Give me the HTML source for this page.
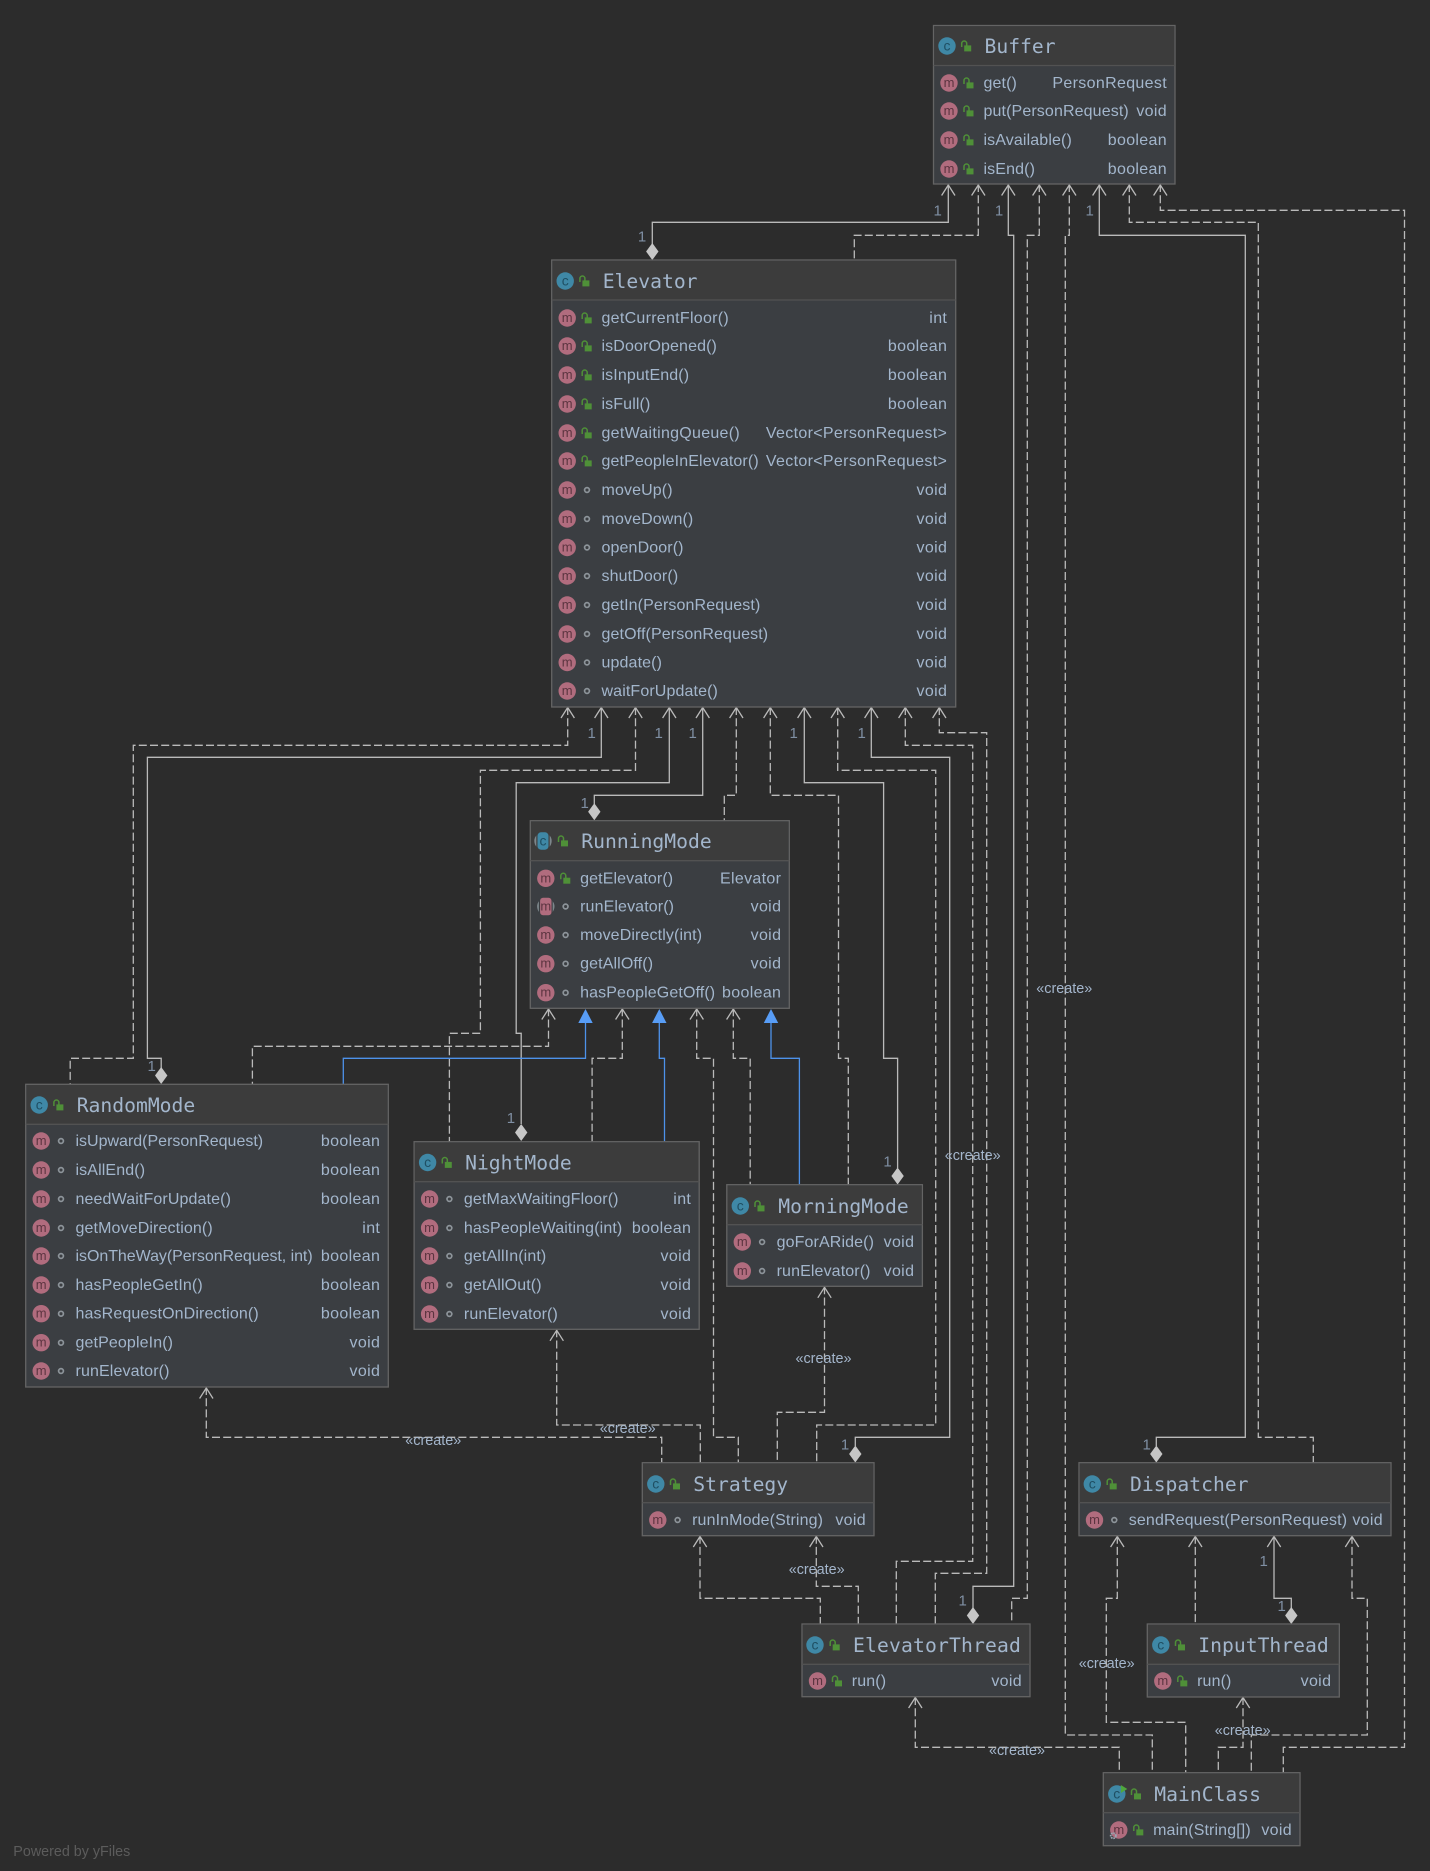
<!DOCTYPE html>
<html><head><meta charset="utf-8"><title>UML Diagram</title>
<style>
html,body{margin:0;padding:0;background:#2c2c2c;width:1430px;height:1871px;overflow:hidden}
svg{display:block}
text{font-family:"Liberation Sans",sans-serif;font-size:16px;fill:#a3b6cc;letter-spacing:.12px}
.r{text-anchor:end;letter-spacing:.33px}
.h{font-family:"DejaVu Sans Mono","Liberation Mono",monospace;font-size:19.7px;letter-spacing:0}
.mt{font-size:13px;fill:#5c3440;text-anchor:middle;letter-spacing:0}
.ct{font-size:14px;fill:#1f4f63;text-anchor:middle;letter-spacing:0}
.u{font-size:15px;fill:#7f8fa3;text-anchor:middle;letter-spacing:0}
.k{font-size:14.4px;fill:#a4b6cc;text-anchor:middle;letter-spacing:0}
.s,.d,.b,.a{fill:none;stroke-width:1.3}
.s,.d,.a{stroke:#bababa}
.d{stroke-dasharray:8 3.2}
.b{stroke:#4d92ea}
.bx{fill:#3b3e42;stroke:#646464;stroke-width:1.3}
.hd{fill:#3c3c3c}
.sp{stroke:#525252;stroke-width:1.3}
.mc{fill:#b16c7e}
.cc{fill:#3f88a6}
</style></head>
<body>
<svg width="1430" height="1871" viewBox="0 0 1430 1871" xmlns="http://www.w3.org/2000/svg">
<defs>
<path id="a" class="a" d="M-6.7 11L0 .5 6.7 11"/>
<path id="t" fill="#589df6" d="M0 0L7.2 14H-7.2Z"/>
<path id="w" fill="#c6c6c6" d="M0 0L6.2 8.5 0 17-6.2 8.5Z"/>
<g id="l"><path d="M1 1V-2.5a2.5 2.5 0 0 1 5 0V0" fill="none" stroke="#4f9038" stroke-width="1.5"/><rect x="3.5" y="-.6" width="7" height="6" fill="#4f9038"/></g>
<circle id="o" cx="35.3" r="2.4" fill="none" stroke="#8d949a" stroke-width="1.7"/>
</defs>
<rect width="1430" height="1871" fill="#2c2c2c"/>

<!-- edges -->
<g>
<path class="s" d="M948.3 184V222.3H652.3V244"/>
<path class="d" d="M978.3 184V235.3H854.3V260"/>
<path class="s" d="M1008.3 184V235.3H1013.7V1586.3H973V1608"/>
<path class="d" d="M1039.3 184V235.3H1027.3V1598.3H1011.7V1624"/>
<path class="d" d="M1069.3 184V235.3H1065.3V1735H1152.3V1772.7"/>
<path class="s" d="M1099.3 184V235.3H1245.3V1437.3H1156.3V1446"/>
<path class="d" d="M1129.3 184V222.3H1258.3V1437.3H1313.3V1462.7"/>
<path class="d" d="M1160.3 184V210.3H1404.5V1747.3H1283.3V1772.7"/>

<path class="d" d="M567.7 707V745.3H133.3V1058.3H70.2V1084.3"/>
<path class="s" d="M601.3 707V757.3H147.4V1058.3H161.2V1068"/>
<path class="d" d="M635.5 707V770.3H480.4V1033.3H449.4V1141.7"/>
<path class="s" d="M669.3 707V782.7H516.2V1033.3H521.2V1124"/>
<path class="s" d="M702.7 707V795.3H594.3V804"/>
<path class="d" d="M736.3 707V795.3H724.3V820.7"/>
<path class="d" d="M770.3 707V795.3H838.5V1058.3H848.3V1184.7"/>
<path class="s" d="M804.3 707V782.7H883.6V1058.3H897.6V1168"/>
<path class="d" d="M837.7 707V770.3H935.7V1425H816.7V1462.7"/>
<path class="s" d="M871.3 707V757.3H949.7V1437.3H855.3V1446"/>
<path class="d" d="M905.3 707V745.3H972.7V1561.3H896.3V1624"/>
<path class="d" d="M939.3 707V732.7H986.7V1573.3H935.3V1624"/>

<path class="d" d="M548.5 1008.3V1046.3H252.4V1084.3"/>
<path class="d" d="M622.3 1008.3V1058.3H592.1V1141.7"/>
<path class="d" d="M696.7 1008.3V1058.3H713.5V1437.3H738.3V1462.7"/>
<path class="d" d="M733.3 1008.3V1058.3H750.2V1184.7"/>
<path class="b" d="M585.5 1020V1058.3H343.3V1084.3"/>
<path class="b" d="M659.3 1020V1058.3H664.5V1141.7"/>
<path class="b" d="M771 1020V1058.3H799.4V1184.7"/>

<path class="d" d="M206.3 1387V1437.3H661.7V1462.7"/>
<path class="d" d="M556.7 1329.3V1425H700.3V1462.7"/>
<path class="d" d="M824.5 1286.3V1412.3H777.3V1462.7"/>
<path class="d" d="M700 1535.7V1598.3H820.3V1624"/>
<path class="d" d="M816.3 1535.7V1586.3H858.3V1624"/>
<path class="d" d="M915.3 1697V1747.3H1119.3V1772.7"/>
<path class="d" d="M1117.3 1535.7V1598.3H1106.3V1722.3H1185.7V1772.7"/>
<path class="d" d="M1195.3 1535.7V1624"/>
<path class="s" d="M1274 1535.7V1598.3H1291.3V1608"/>
<path class="d" d="M1352 1535.7V1598.3H1367.3V1735H1251.3V1772.7"/>
<path class="d" d="M1243 1697V1747.3H1218.3V1772.7"/>

<!-- open arrowheads -->
<use href="#a" x="948.3" y="184.5"/><use href="#a" x="978.3" y="184.5"/><use href="#a" x="1008.3" y="184.5"/><use href="#a" x="1039.3" y="184.5"/><use href="#a" x="1069.3" y="184.5"/><use href="#a" x="1099.3" y="184.5"/><use href="#a" x="1129.3" y="184.5"/><use href="#a" x="1160.3" y="184.5"/>
<use href="#a" x="567.7" y="707"/><use href="#a" x="601.3" y="707"/><use href="#a" x="635.5" y="707"/><use href="#a" x="669.3" y="707"/><use href="#a" x="702.7" y="707"/><use href="#a" x="736.3" y="707"/><use href="#a" x="770.3" y="707"/><use href="#a" x="804.3" y="707"/><use href="#a" x="837.7" y="707"/><use href="#a" x="871.3" y="707"/><use href="#a" x="905.3" y="707"/><use href="#a" x="939.3" y="707"/>
<use href="#a" x="548.5" y="1008.5"/><use href="#a" x="622.3" y="1008.5"/><use href="#a" x="696.7" y="1008.5"/><use href="#a" x="733.3" y="1008.5"/>
<use href="#a" x="206.3" y="1387.5"/><use href="#a" x="556.7" y="1329.8"/><use href="#a" x="824.5" y="1286.8"/>
<use href="#a" x="700" y="1536"/><use href="#a" x="816.3" y="1536"/><use href="#a" x="915.3" y="1697"/>
<use href="#a" x="1117.3" y="1536"/><use href="#a" x="1195.3" y="1536"/><use href="#a" x="1274" y="1536"/><use href="#a" x="1352" y="1536"/><use href="#a" x="1243" y="1697"/>
<!-- triangles -->
<use href="#t" x="585.5" y="1009"/><use href="#t" x="659.3" y="1009"/><use href="#t" x="771" y="1009"/>
<!-- diamonds -->
<use href="#w" x="652.3" y="243"/><use href="#w" x="594.3" y="803.3"/><use href="#w" x="161.2" y="1067"/><use href="#w" x="521.2" y="1124"/><use href="#w" x="897.6" y="1167.5"/><use href="#w" x="855.3" y="1445.5"/><use href="#w" x="1156.3" y="1445.5"/><use href="#w" x="973" y="1607"/><use href="#w" x="1291.3" y="1607"/>
</g>

<!-- multiplicity -->
<g>
<text class="u" x="937.7" y="215.5">1</text><text class="u" x="999" y="215.5">1</text><text class="u" x="1089.7" y="215.5">1</text><text class="u" x="642" y="241.5">1</text>
<text class="u" x="591.7" y="738">1</text><text class="u" x="658.7" y="738">1</text><text class="u" x="692.7" y="738">1</text><text class="u" x="793.7" y="738">1</text><text class="u" x="861.7" y="738">1</text>
<text class="u" x="584.7" y="808">1</text><text class="u" x="151.7" y="1071">1</text><text class="u" x="510.9" y="1123">1</text><text class="u" x="887.6" y="1166.5">1</text>
<text class="u" x="845" y="1449.5">1</text><text class="u" x="962.7" y="1605.5">1</text><text class="u" x="1146.7" y="1449.5">1</text><text class="u" x="1263.7" y="1566">1</text><text class="u" x="1281.7" y="1611">1</text>
</g>

<!-- Buffer -->
<g transform="translate(933.5,0)">
<rect class="bx" width="241.5" height="158.5" y="25.5"/><rect class="hd" x=".7" y="26.2" width="240.1" height="39.3"/><path class="sp" d="M0 65.5H241.5"/>
<circle class="cc" cx="13.5" cy="46" r="8.7"/><text class="ct" x="13.5" y="50.5">c</text><use href="#l" x="27.2" y="46"/><text class="h" x="51" y="53">Buffer</text>
<g transform="translate(0,83)"><circle class="mc" cx="15.5" r="8.7"/><text class="mt" x="15.5" y="4">m</text><use href="#l" x="29.5"/><text x="50" y="5">get()</text><text class="r" x="233.5" y="5">PersonRequest</text></g>
<g transform="translate(0,111)"><circle class="mc" cx="15.5" r="8.7"/><text class="mt" x="15.5" y="4">m</text><use href="#l" x="29.5"/><text x="50" y="5">put(PersonRequest)</text><text class="r" x="233.5" y="5">void</text></g>
<g transform="translate(0,140)"><circle class="mc" cx="15.5" r="8.7"/><text class="mt" x="15.5" y="4">m</text><use href="#l" x="29.5"/><text x="50" y="5">isAvailable()</text><text class="r" x="233.5" y="5">boolean</text></g>
<g transform="translate(0,169)"><circle class="mc" cx="15.5" r="8.7"/><text class="mt" x="15.5" y="4">m</text><use href="#l" x="29.5"/><text x="50" y="5">isEnd()</text><text class="r" x="233.5" y="5">boolean</text></g>
</g>

<!-- Elevator -->
<g transform="translate(551.7,0)">
<rect class="bx" width="404" height="447" y="260"/><rect class="hd" x=".7" y="260.7" width="402.6" height="39.3"/><path class="sp" d="M0 300H404"/>
<circle class="cc" cx="13.5" cy="281" r="8.7"/><text class="ct" x="13.5" y="285.5">c</text><use href="#l" x="27.2" y="281"/><text class="h" x="51" y="288">Elevator</text>
<g transform="translate(0,318)"><circle class="mc" cx="15.5" r="8.7"/><text class="mt" x="15.5" y="4">m</text><use href="#l" x="29.5"/><text x="49.8" y="5" style="letter-spacing:.28px">getCurrentFloor()</text><text class="r" x="395.5" y="5">int</text></g>
<g transform="translate(0,346)"><circle class="mc" cx="15.5" r="8.7"/><text class="mt" x="15.5" y="4">m</text><use href="#l" x="29.5"/><text x="49.8" y="5">isDoorOpened()</text><text class="r" x="395.5" y="5">boolean</text></g>
<g transform="translate(0,375)"><circle class="mc" cx="15.5" r="8.7"/><text class="mt" x="15.5" y="4">m</text><use href="#l" x="29.5"/><text x="49.8" y="5">isInputEnd()</text><text class="r" x="395.5" y="5">boolean</text></g>
<g transform="translate(0,404)"><circle class="mc" cx="15.5" r="8.7"/><text class="mt" x="15.5" y="4">m</text><use href="#l" x="29.5"/><text x="49.8" y="5">isFull()</text><text class="r" x="395.5" y="5">boolean</text></g>
<g transform="translate(0,433)"><circle class="mc" cx="15.5" r="8.7"/><text class="mt" x="15.5" y="4">m</text><use href="#l" x="29.5"/><text x="49.8" y="5" style="letter-spacing:.28px">getWaitingQueue()</text><text class="r" x="395.5" y="5">Vector&lt;PersonRequest&gt;</text></g>
<g transform="translate(0,461)"><circle class="mc" cx="15.5" r="8.7"/><text class="mt" x="15.5" y="4">m</text><use href="#l" x="29.5"/><text x="49.8" y="5">getPeopleInElevator()</text><text class="r" x="395.5" y="5">Vector&lt;PersonRequest&gt;</text></g>
<g transform="translate(0,490)"><circle class="mc" cx="15.5" r="8.7"/><text class="mt" x="15.5" y="4">m</text><use href="#o"/><text x="49.8" y="5">moveUp()</text><text class="r" x="395.5" y="5">void</text></g>
<g transform="translate(0,519)"><circle class="mc" cx="15.5" r="8.7"/><text class="mt" x="15.5" y="4">m</text><use href="#o"/><text x="49.8" y="5">moveDown()</text><text class="r" x="395.5" y="5">void</text></g>
<g transform="translate(0,547.5)"><circle class="mc" cx="15.5" r="8.7"/><text class="mt" x="15.5" y="4">m</text><use href="#o"/><text x="49.8" y="5">openDoor()</text><text class="r" x="395.5" y="5">void</text></g>
<g transform="translate(0,576)"><circle class="mc" cx="15.5" r="8.7"/><text class="mt" x="15.5" y="4">m</text><use href="#o"/><text x="49.8" y="5">shutDoor()</text><text class="r" x="395.5" y="5">void</text></g>
<g transform="translate(0,605)"><circle class="mc" cx="15.5" r="8.7"/><text class="mt" x="15.5" y="4">m</text><use href="#o"/><text x="49.8" y="5">getIn(PersonRequest)</text><text class="r" x="395.5" y="5">void</text></g>
<g transform="translate(0,634)"><circle class="mc" cx="15.5" r="8.7"/><text class="mt" x="15.5" y="4">m</text><use href="#o"/><text x="49.8" y="5">getOff(PersonRequest)</text><text class="r" x="395.5" y="5">void</text></g>
<g transform="translate(0,662.5)"><circle class="mc" cx="15.5" r="8.7"/><text class="mt" x="15.5" y="4">m</text><use href="#o"/><text x="49.8" y="5">update()</text><text class="r" x="395.5" y="5">void</text></g>
<g transform="translate(0,691)"><circle class="mc" cx="15.5" r="8.7"/><text class="mt" x="15.5" y="4">m</text><use href="#o"/><text x="49.8" y="5">waitForUpdate()</text><text class="r" x="395.5" y="5">void</text></g>
</g>

<!-- RunningMode -->
<g transform="translate(530.3,0)">
<rect class="bx" width="259" height="187.6" y="820.7"/><rect class="hd" x=".7" y="821.4" width="257.6" height="39.3"/><path class="sp" d="M0 860.7H259"/>
<circle cx="12.7" cy="841" r="8.7" fill="#7d878c"/><rect x="6" y="831" width="13.4" height="20" fill="#3c3c3c"/><rect x="7.2" y="832.3" width="11" height="17.4" rx="3.5" fill="#3f88a6"/><text class="ct" x="12.7" y="845.5">c</text>
<use href="#l" x="27.2" y="841"/><text class="h" x="51" y="848">RunningMode</text>
<g transform="translate(0,878.3)"><circle class="mc" cx="15.5" r="8.7"/><text class="mt" x="15.5" y="4">m</text><use href="#l" x="29.5"/><text x="49.8" y="5">getElevator()</text><text class="r" x="251" y="5">Elevator</text></g>
<g transform="translate(0,906.5)"><circle cx="15.5" r="8.7" fill="#7d878c"/><rect x="8.6" y="-10" width="13.8" height="20" fill="#3b3e42"/><rect x="9.8" y="-8.7" width="11.4" height="17.4" rx="3" fill="#b16c7e"/><text class="mt" x="15.5" y="4">m</text><use href="#o"/><text x="49.8" y="5">runElevator()</text><text class="r" x="251" y="5">void</text></g>
<g transform="translate(0,935)"><circle class="mc" cx="15.5" r="8.7"/><text class="mt" x="15.5" y="4">m</text><use href="#o"/><text x="49.8" y="5">moveDirectly(int)</text><text class="r" x="251" y="5">void</text></g>
<g transform="translate(0,963.7)"><circle class="mc" cx="15.5" r="8.7"/><text class="mt" x="15.5" y="4">m</text><use href="#o"/><text x="49.8" y="5">getAllOff()</text><text class="r" x="251" y="5">void</text></g>
<g transform="translate(0,992.7)"><circle class="mc" cx="15.5" r="8.7"/><text class="mt" x="15.5" y="4">m</text><use href="#o"/><text x="49.8" y="5">hasPeopleGetOff()</text><text class="r" x="251" y="5">boolean</text></g>
</g>

<!-- RandomMode -->
<g transform="translate(25.7,0)">
<rect class="bx" width="362.6" height="302.7" y="1084.3"/><rect class="hd" x=".7" y="1085" width="361.2" height="39.3"/><path class="sp" d="M0 1124.3H362.6"/>
<circle class="cc" cx="13.5" cy="1105" r="8.7"/><text class="ct" x="13.5" y="1109.5">c</text><use href="#l" x="27.2" y="1105"/><text class="h" x="51" y="1112">RandomMode</text>
<g transform="translate(0,1141)"><circle class="mc" cx="15.5" r="8.7"/><text class="mt" x="15.5" y="4">m</text><use href="#o"/><text x="49.8" y="5" style="letter-spacing:0">isUpward(PersonRequest)</text><text class="r" x="354.5" y="5">boolean</text></g>
<g transform="translate(0,1170)"><circle class="mc" cx="15.5" r="8.7"/><text class="mt" x="15.5" y="4">m</text><use href="#o"/><text x="49.8" y="5">isAllEnd()</text><text class="r" x="354.5" y="5">boolean</text></g>
<g transform="translate(0,1199)"><circle class="mc" cx="15.5" r="8.7"/><text class="mt" x="15.5" y="4">m</text><use href="#o"/><text x="49.8" y="5">needWaitForUpdate()</text><text class="r" x="354.5" y="5">boolean</text></g>
<g transform="translate(0,1228)"><circle class="mc" cx="15.5" r="8.7"/><text class="mt" x="15.5" y="4">m</text><use href="#o"/><text x="49.8" y="5">getMoveDirection()</text><text class="r" x="354.5" y="5">int</text></g>
<g transform="translate(0,1256)"><circle class="mc" cx="15.5" r="8.7"/><text class="mt" x="15.5" y="4">m</text><use href="#o"/><text x="49.8" y="5" style="letter-spacing:-.05px">isOnTheWay(PersonRequest, int)</text><text class="r" x="354.5" y="5">boolean</text></g>
<g transform="translate(0,1285)"><circle class="mc" cx="15.5" r="8.7"/><text class="mt" x="15.5" y="4">m</text><use href="#o"/><text x="49.8" y="5">hasPeopleGetIn()</text><text class="r" x="354.5" y="5">boolean</text></g>
<g transform="translate(0,1313.7)"><circle class="mc" cx="15.5" r="8.7"/><text class="mt" x="15.5" y="4">m</text><use href="#o"/><text x="49.8" y="5">hasRequestOnDirection()</text><text class="r" x="354.5" y="5">boolean</text></g>
<g transform="translate(0,1342.7)"><circle class="mc" cx="15.5" r="8.7"/><text class="mt" x="15.5" y="4">m</text><use href="#o"/><text x="49.8" y="5">getPeopleIn()</text><text class="r" x="354.5" y="5">void</text></g>
<g transform="translate(0,1371)"><circle class="mc" cx="15.5" r="8.7"/><text class="mt" x="15.5" y="4">m</text><use href="#o"/><text x="49.8" y="5">runElevator()</text><text class="r" x="354.5" y="5">void</text></g>
</g>

<!-- NightMode -->
<g transform="translate(414.1,0)">
<rect class="bx" width="285.1" height="187.6" y="1141.7"/><rect class="hd" x=".7" y="1142.4" width="283.7" height="39.3"/><path class="sp" d="M0 1181.7H285.1"/>
<circle class="cc" cx="13.5" cy="1162.5" r="8.7"/><text class="ct" x="13.5" y="1167">c</text><use href="#l" x="27.2" y="1162.5"/><text class="h" x="51" y="1169.5">NightMode</text>
<g transform="translate(0,1199)"><circle class="mc" cx="15.5" r="8.7"/><text class="mt" x="15.5" y="4">m</text><use href="#o"/><text x="49.8" y="5">getMaxWaitingFloor()</text><text class="r" x="277.1" y="5">int</text></g>
<g transform="translate(0,1228)"><circle class="mc" cx="15.5" r="8.7"/><text class="mt" x="15.5" y="4">m</text><use href="#o"/><text x="49.8" y="5">hasPeopleWaiting(int)</text><text class="r" x="277.1" y="5">boolean</text></g>
<g transform="translate(0,1256)"><circle class="mc" cx="15.5" r="8.7"/><text class="mt" x="15.5" y="4">m</text><use href="#o"/><text x="49.8" y="5">getAllIn(int)</text><text class="r" x="277.1" y="5">void</text></g>
<g transform="translate(0,1285)"><circle class="mc" cx="15.5" r="8.7"/><text class="mt" x="15.5" y="4">m</text><use href="#o"/><text x="49.8" y="5">getAllOut()</text><text class="r" x="277.1" y="5">void</text></g>
<g transform="translate(0,1314)"><circle class="mc" cx="15.5" r="8.7"/><text class="mt" x="15.5" y="4">m</text><use href="#o"/><text x="49.8" y="5">runElevator()</text><text class="r" x="277.1" y="5">void</text></g>
</g>

<!-- MorningMode -->
<g transform="translate(726.8,0)">
<rect class="bx" width="195.6" height="101.6" y="1184.7"/><rect class="hd" x=".7" y="1185.4" width="194.2" height="39.3"/><path class="sp" d="M0 1224.7H195.6"/>
<circle class="cc" cx="13.5" cy="1206" r="8.7"/><text class="ct" x="13.5" y="1210.5">c</text><use href="#l" x="27.2" y="1206"/><text class="h" x="51.5" y="1213">MorningMode</text>
<g transform="translate(0,1242)"><circle class="mc" cx="15.5" r="8.7"/><text class="mt" x="15.5" y="4">m</text><use href="#o"/><text x="49.8" y="5">goForARide()</text><text class="r" x="187.5" y="5">void</text></g>
<g transform="translate(0,1271)"><circle class="mc" cx="15.5" r="8.7"/><text class="mt" x="15.5" y="4">m</text><use href="#o"/><text x="49.8" y="5">runElevator()</text><text class="r" x="187.5" y="5">void</text></g>
</g>

<!-- Strategy -->
<g transform="translate(642.3,0)">
<rect class="bx" width="231.7" height="73" y="1462.7"/><rect class="hd" x=".7" y="1463.4" width="230.3" height="39.3"/><path class="sp" d="M0 1502.7H231.7"/>
<circle class="cc" cx="13.5" cy="1484" r="8.7"/><text class="ct" x="13.5" y="1488.5">c</text><use href="#l" x="27.2" y="1484"/><text class="h" x="51" y="1491">Strategy</text>
<g transform="translate(0,1520)"><circle class="mc" cx="15.5" r="8.7"/><text class="mt" x="15.5" y="4">m</text><use href="#o"/><text x="49.8" y="5">runInMode(String)</text><text class="r" x="223.7" y="5">void</text></g>
</g>

<!-- ElevatorThread -->
<g transform="translate(802,0)">
<rect class="bx" width="228" height="72.7" y="1624"/><rect class="hd" x=".7" y="1624.7" width="226.6" height="39.6"/><path class="sp" d="M0 1664.3H228"/>
<circle class="cc" cx="13" cy="1645" r="8.7"/><text class="ct" x="13" y="1649.5">c</text><use href="#l" x="27.2" y="1645"/><text class="h" x="51" y="1652" style="letter-spacing:.15px">ElevatorThread</text>
<g transform="translate(0,1681)"><circle class="mc" cx="15.5" r="8.7"/><text class="mt" x="15.5" y="4">m</text><use href="#l" x="29.5"/><text x="49.8" y="5">run()</text><text class="r" x="220" y="5">void</text></g>
</g>

<!-- Dispatcher -->
<g transform="translate(1079,0)">
<rect class="bx" width="312" height="73" y="1462.7"/><rect class="hd" x=".7" y="1463.4" width="310.6" height="39.3"/><path class="sp" d="M0 1502.7H312"/>
<circle class="cc" cx="13.3" cy="1484" r="8.7"/><text class="ct" x="13.3" y="1488.5">c</text><use href="#l" x="27.2" y="1484"/><text class="h" x="51" y="1491">Dispatcher</text>
<g transform="translate(0,1520)"><circle class="mc" cx="15.5" r="8.7"/><text class="mt" x="15.5" y="4">m</text><use href="#o"/><text x="49.8" y="5">sendRequest(PersonRequest)</text><text class="r" x="304" y="5">void</text></g>
</g>

<!-- InputThread -->
<g transform="translate(1147.3,0)">
<rect class="bx" width="192" height="73" y="1624"/><rect class="hd" x=".7" y="1624.7" width="190.6" height="39.6"/><path class="sp" d="M0 1664.3H192"/>
<circle class="cc" cx="13.5" cy="1645" r="8.7"/><text class="ct" x="13.5" y="1649.5">c</text><use href="#l" x="27.2" y="1645"/><text class="h" x="51" y="1652">InputThread</text>
<g transform="translate(0,1681)"><circle class="mc" cx="15.5" r="8.7"/><text class="mt" x="15.5" y="4">m</text><use href="#l" x="29.5"/><text x="49.8" y="5">run()</text><text class="r" x="184" y="5">void</text></g>
</g>

<!-- MainClass -->
<g transform="translate(1103.3,0)">
<rect class="bx" width="196.7" height="73" y="1772.7"/><rect class="hd" x=".7" y="1773.4" width="195.3" height="39.3"/><path class="sp" d="M0 1812.7H196.7"/>
<circle class="cc" cx="13.5" cy="1794" r="8.7"/><text class="ct" x="13.5" y="1798.5">c</text><path d="M17.5 1785L24 1789 17.5 1793Z" fill="#4fa83d"/><use href="#l" x="27.2" y="1794"/><text class="h" x="51" y="1801">MainClass</text>
<g transform="translate(0,1830)"><circle class="mc" cx="15.5" r="8.7"/><text class="mt" x="15.5" y="4">m</text><circle cx="10" cy="5.7" r="2.6" fill="none" stroke="#9aa7b3" stroke-width="1.8" stroke-dasharray="1.6 .8"/><use href="#l" x="29.5"/><text x="49.8" y="5">main(String[])</text><text class="r" x="188.7" y="5">void</text></g>
</g>

<!-- create labels -->
<g>
<text class="k" x="1064.3" y="993">«create»</text>
<text class="k" x="972.7" y="1160">«create»</text>
<text class="k" x="823.5" y="1363">«create»</text>
<text class="k" x="433.3" y="1445">«create»</text>
<text class="k" x="627.7" y="1433">«create»</text>
<text class="k" x="816.7" y="1574">«create»</text>
<text class="k" x="1106.7" y="1668">«create»</text>
<text class="k" x="1242.7" y="1735">«create»</text>
<text class="k" x="1017" y="1755">«create»</text>
</g>

<text x="13.3" y="1856" textLength="117" lengthAdjust="spacingAndGlyphs" style="font-size:14.5px;fill:#5c5c5c;letter-spacing:0">Powered by yFiles</text>
</svg>
</body></html>
